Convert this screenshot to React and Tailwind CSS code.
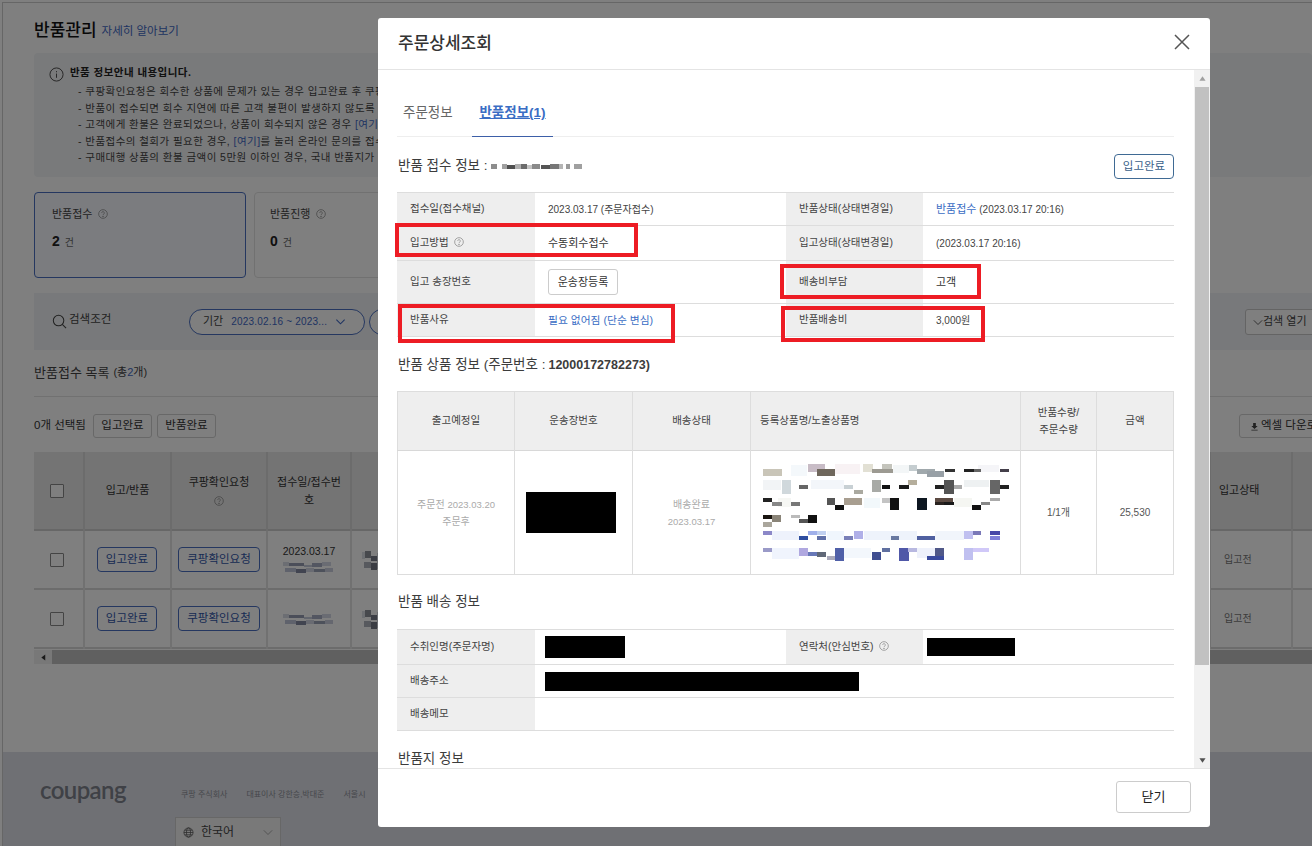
const PIX = [
[980,345,40,34,'#f4f8fb'],[1090,342,60,30,'#f8f2f4'],[1230,345,40,26,'#f3f6f7'],[1440,345,50,22,'#f5f5f8'],[912,392,44,30,'#f2f4f6'],[1030,392,80,26,'#f3f6fa'],[1405,392,60,20,'#eef1f2'],[950,445,30,26,'#f6f7f4'],[1160,445,40,30,'#f2f8fb'],[1380,445,44,26,'#f5f6f2'],[934,543,66,28,'#eef2fc'],[1068,543,44,28,'#f0f6fd'],[1160,543,130,28,'#eef3fb'],[1335,543,70,28,'#f1f5fb'],[934,595,66,34,'#f0f4fd'],[1112,595,66,30,'#f3f7fc'],[1290,595,44,30,'#eef1fb'],
[912,358,46,20,'#c9c5b8'],[1022,342,42,24,'#c8bcc6'],[1045,358,45,22,'#6f675c'],[1157,342,24,26,'#e2e0d4'],[1180,358,50,12,'#9c9a92'],[1205,342,24,16,'#c4c4bc'],[1270,345,20,20,'#c5cdd0'],[1290,358,45,14,'#a0a8ac'],[1315,365,40,16,'#98a0a6'],[1358,358,24,10,'#333333'],[1405,358,24,10,'#222222'],[1430,358,16,10,'#666666'],[1492,358,22,10,'#443f4a'],
[958,392,22,40,'#d0d8dc'],[1000,405,22,14,'#666666'],[1112,405,22,14,'#c8d0d4'],[1135,420,22,12,'#aaa9a0'],[1180,392,22,36,'#a8aaa6'],[1203,405,20,14,'#111111'],[1245,405,24,14,'#1a1a1a'],[1268,392,22,14,'#b5ae9c'],[1335,405,24,14,'#222222'],[1357,392,24,40,'#555555'],[1380,405,20,14,'#aaaaaa'],[1468,392,24,40,'#666666'],[1492,405,22,14,'#222222'],
[912,445,22,12,'#222222'],[934,458,24,10,'#888888'],[980,458,22,10,'#777777'],[1068,445,22,22,'#555555'],[1090,467,22,14,'#111111'],[1112,445,44,22,'#a89e90'],[1203,445,20,14,'#c4c4c4'],[1223,445,22,36,'#111111'],[1290,445,24,36,'#0d1620'],[1335,445,44,12,'#5b4a42'],[1335,457,22,10,'#2a2320'],[1357,457,24,10,'#1a1a1a'],[1425,467,22,14,'#111111'],[1447,457,22,10,'#888888'],[1468,445,24,10,'#aaaaaa'],
[912,495,24,14,'#1a1510'],[934,495,22,22,'#8a8478'],[912,517,22,14,'#aaa69c'],[980,495,22,10,'#bbbbbb'],[1000,507,24,12,'#555555'],[1023,495,22,24,'#111111'],
[912,543,22,14,'#8c88c8'],[1000,558,22,12,'#2e4ea0'],[1023,543,22,12,'#a0b0ea'],[1045,558,22,12,'#6070a8'],[1045,543,22,12,'#c0d0f0'],[1112,558,22,12,'#7a80b8'],[1135,543,22,24,'#b0b0e8'],[1225,558,20,12,'#6878a0'],[1290,558,44,12,'#5060a0'],[1405,543,22,24,'#c0c0f0'],[1427,543,20,14,'#7a78b8'],[1468,543,24,14,'#4848a8'],[1468,558,24,12,'#8080d8'],
[912,595,22,12,'#9a9ac8'],[1000,595,22,24,'#b0a8e0'],[1023,607,22,12,'#6878b8'],[1045,607,22,14,'#606878'],[1090,595,22,38,'#5060a8'],[1068,620,22,12,'#aaaabb'],[1180,607,22,24,'#404e90'],[1203,595,20,12,'#6070a0'],[1245,595,24,38,'#5058a8'],[1268,595,22,12,'#b8b8e0'],[1335,595,22,24,'#505888'],[1315,620,42,12,'#3a4a9e'],[1405,595,22,36,'#c0c0f0'],[1427,595,40,12,'#d0c8f8'],
];

function Help({ className = '' }) {
  return (
    <svg viewBox="0 0 12 12" className={`inline-block w-[10px] h-[10px] ${className}`} fill="none" stroke="#8a8a8a" strokeWidth="0.9">
      <circle cx="6" cy="6" r="5.2" />
      <path d="M4.4 4.8a1.6 1.6 0 1 1 2.4 1.4c-.5.3-.8.6-.8 1.2" />
      <circle cx="6" cy="9" r="0.4" fill="#8a8a8a" />
    </svg>
  );
}

function Blur({ cells, w, h, vx = 0, vy = 0, vw, vh, className = 'block' }) {
  return (
    <svg width={w} height={h} viewBox={`${vx} ${vy} ${vw} ${vh}`} preserveAspectRatio="none" shapeRendering="crispEdges" className={className}>
      {cells.map((c, i) => <rect key={i} x={c[0]} y={c[1]} width={c[2]} height={c[3]} fill={c[4]} />)}
    </svg>
  );
}

const BLUR_B = [[2,1,6,3,'#c8cede'],[8,2,14,2,'#6b7492'],[22,3,8,2,'#adb5cd'],[30,2,10,3,'#838ba9'],[40,1,8,3,'#c3c9dc'],[4,6,10,3,'#a5adc8'],[14,7,10,3,'#4f5878'],[24,6,8,3,'#bfc5d9'],[32,7,10,2,'#727b9a'],[42,6,8,3,'#b5bcd2']];
const BLUR_C = [[0,2,3,6,'#cfd3dc'],[3,1,5,6,'#5f6470'],[8,5,5,5,'#41475a'],[2,11,6,5,'#8d92a0'],[8,12,5,6,'#3d4354'],[13,3,3,14,'#c9ced8']];
const BLUR_ID = [[0,1,6,5,'#8d8d8d'],[11,1,5,5,'#a0a0a0'],[16,2,8,4,'#4f4f4f'],[24,1,6,5,'#b0b0b0'],[30,1,6,5,'#6c6c6c'],[36,2,5,4,'#c4c4c4'],[41,1,8,5,'#8a8a8a'],[50,2,9,4,'#555555'],[59,1,9,5,'#777777'],[68,1,4,5,'#b5b5b5'],[75,1,4,5,'#9a9a9a'],[83,1,8,5,'#a0a0a0']];

function OutlineBtn({ children, className = '' }) {
  return <span className={`flex items-center justify-center border text-[11.5px] bg-white rounded-[4px] h-[25px] ${className}`}>{children}</span>;
}

const pageBtn = 'border-[#4a6fc0] text-[#2f55a8]';

function Row({ check, state }) {
  return (
    <tr className="h-[59px] border-b-2 border-[#d8d8d8]">
      <td className="border-r-2 border-[#e2e2e2] text-center pr-[4px]"><span className="inline-block align-middle w-[14px] h-[14px] border border-[#888] bg-white rounded-[1px]" /></td>
      <td className="border-r-2 border-[#e2e2e2]"><OutlineBtn className={`${pageBtn} w-[60px] ml-[12px]`}>입고완료</OutlineBtn></td>
      <td className="border-r-2 border-[#e2e2e2]"><OutlineBtn className={`${pageBtn} w-[82px] mx-auto`}>쿠팡확인요청</OutlineBtn></td>
      <td className="border-r-2 border-[#e2e2e2] text-center text-[10.5px] text-[#333]">
        {check && <div className="leading-[14px] mb-[3px] -mt-[3px]">{check}</div>}
        <div className="flex justify-center"><Blur cells={BLUR_B} w={56} h={12} vw={54} vh={10} className="block opacity-70" /></div>
      </td>
      <td className="border-r-2 border-[#e2e2e2] pl-[10px]"><Blur cells={BLUR_C} w={18} h={20} vw={16} vh={18} className="block opacity-70" /></td>
      <td className="border-r-2 border-[#e2e2e2] text-[10px] text-[#777] pl-[13px]">{state}</td>
      <td />
    </tr>
  );
}

function Background() {
  return (
    <div className="ml-[2px] mt-[2px] h-[844px] border-l border-t border-[#cccccc] flex flex-col overflow-hidden">
      <div className="pl-[31px] flex-1 min-h-0">
        <div className="mt-[17px] h-[22px] flex items-center whitespace-nowrap">
          <span className="text-[17px] font-medium text-[#111]">반품관리</span>
          <span className="ml-[5px] text-[11.5px] text-[#3f68c4] mt-[2px]">자세히 알아보기</span>
        </div>
        <div className="mt-[11px] h-[124px] bg-[#f3f4f6] rounded-[4px] pl-[15px] pt-[12px] whitespace-nowrap flex">
          <svg viewBox="0 0 16 16" className="w-[15px] h-[15px] mt-[2px] shrink-0" fill="none" stroke="#444" strokeWidth="1">
            <circle cx="8" cy="8" r="7" />
            <path d="M8 7v4.5M8 4.4v1.2" />
          </svg>
          <div className="ml-[6px]">
            <div className="text-[10.5px] font-bold text-[#222] leading-[14px] tracking-[0.45px]">반품 정보안내 내용입니다.</div>
            <div className="pl-[8px] mt-[4px] text-[10.5px] text-[#444] leading-[16.5px] tracking-[0.45px]">
              <div>- 쿠팡확인요청은 회수한 상품에 문제가 있는 경우 입고완료 후 쿠팡에 확인을 요청하는 기능입니다.</div>
              <div>- 반품이 접수되면 회수 지연에 따른 고객 불편이 발생하지 않도록 처리해 주세요.</div>
              <div>- 고객에게 환불은 완료되었으나, 상품이 회수되지 않은 경우 <span className="text-[#3f68c4]">[여기]</span>를 눌러 문의해 주세요.</div>
              <div>- 반품접수의 철회가 필요한 경우, <span className="text-[#3f68c4]">[여기]</span>를 눌러 온라인 문의를 접수해 주세요.</div>
              <div>- 구매대행 상품의 환불 금액이 5만원 이하인 경우, 국내 반품지가 없어도 됩니다.</div>
            </div>
          </div>
        </div>
        <div className="mt-[15px] flex gap-[8px]">
          <div className="w-[212px] h-[86px] border border-[#4a6fc0] rounded-[4px] bg-[#f6f9ff] pl-[17px] pt-[13px]">
            <div className="text-[11px] text-[#444] flex items-center gap-[6px] h-[16px]">반품접수 <Help /></div>
            <div className="mt-[9px] flex items-baseline gap-[5px] text-[#222]"><b className="text-[14px]">2</b><span className="text-[10px] text-[#666]">건</span></div>
          </div>
          <div className="w-[212px] h-[86px] border border-[#e3e3e3] rounded-[4px] bg-white pl-[15px] pt-[13px]">
            <div className="text-[11px] text-[#444] flex items-center gap-[6px] h-[16px]">반품진행 <Help /></div>
            <div className="mt-[9px] flex items-baseline gap-[5px] text-[#222]"><b className="text-[14px]">0</b><span className="text-[10px] text-[#666]">건</span></div>
          </div>
        </div>
        <div className="mt-[15px] h-[57px] bg-[#f1f3f6] flex items-center whitespace-nowrap overflow-hidden relative">
          <svg viewBox="0 0 16 16" className="ml-[18px] w-[15px] h-[15px] shrink-0" fill="none" stroke="#444" strokeWidth="1.1">
            <circle cx="7" cy="7" r="5.6" />
            <path d="M11 11l4 4" />
          </svg>
          <span className="ml-[2px] w-[44px] shrink-0 text-[11.5px] text-[#444] -mt-[3px]">검색조건</span>
          <div className="ml-[76px] w-[176px] h-[26px] border border-[#4a6fc0] rounded-full bg-white flex items-center pl-[13px] text-[10px] gap-[8px] shrink-0">
            <span className="text-[#444] text-[11px]">기간</span>
            <span className="text-[#3f68c4] tracking-[0.2px]">2023.02.16 ~ 2023...</span>
            <svg viewBox="0 0 12 12" className="w-[11px] h-[11px]" fill="none" stroke="#3f68c4" strokeWidth="1.2"><path d="M1.500 4l4.500 4.500L10.500 4" /></svg>
          </div>
          <div className="ml-[4px] w-[60px] h-[26px] border border-[#4a6fc0] rounded-full bg-white shrink-0" />
          <div className="ml-auto w-[72px] -mr-[5px] h-[26px] border border-[#c8c8c8] rounded-[3px] bg-white flex items-center pl-[7px] text-[11px] text-[#444] shrink-0">
            <svg viewBox="0 0 12 12" className="w-[10px] h-[10px] shrink-0" fill="none" stroke="#444" strokeWidth="1"><path d="M1 4l5 5 5-5" /></svg>
            <span>검색 열기</span>
          </div>
        </div>
        <div className="mt-[12px] h-[21px] flex items-center text-[13px] text-[#444] whitespace-nowrap">
          반품접수 목록 <span className="ml-[4px] text-[11px]">(총<span className="text-[#3f68c4]">2</span>개)</span>
        </div>
        <div className="mt-[13px] border-t border-[#e3e3e3]" />
        <div className="mt-[17px] h-[24px] flex items-center text-[11.5px] text-[#333] whitespace-nowrap gap-[5px]">
          <span className="w-[54px] shrink-0">0개 선택됨</span>
          <span className="h-[24px] w-[59px] flex items-center justify-center border border-[#d0d0d0] rounded-[3px] shrink-0">입고완료</span>
          <span className="h-[24px] w-[59px] flex items-center justify-center border border-[#d0d0d0] rounded-[3px] shrink-0">반품완료</span>
          <span className="ml-auto -mr-[5px] w-[78px] h-[24px] flex items-center pl-[10px] border border-[#d0d0d0] rounded-[3px] gap-[2px] bg-white shrink-0 overflow-hidden">
            <svg viewBox="0 0 10 10" className="w-[9px] h-[9px] shrink-0" fill="#444"><path d="M3.500 1h3v3.500H8.500L5 7.800 1.500 4.500h2zM1.500 8.500h7v1h-7z" /></svg>
            엑셀 다운로드
          </span>
        </div>
        <div className="mt-[14px] w-[1306px]">
          <table className="w-[1306px] table-fixed">
            <colgroup><col className="w-[50px]" /><col className="w-[87px]" /><col className="w-[96px]" /><col className="w-[84px]" /><col className="w-[859px]" /><col className="w-[82px]" /><col className="w-[48px]" /></colgroup>
            <thead>
              <tr className="h-[78px] bg-[#e8e8e8] border-b-2 border-[#cfcfcf] text-[11px] text-[#333] font-normal">
                <th className="border-r-2 border-[#d8d8d8] font-normal text-center pr-[4px]"><span className="inline-block align-middle w-[14px] h-[14px] border border-[#888] bg-white rounded-[1px]" /></th>
                <th className="border-r-2 border-[#d8d8d8] font-normal">입고/반품</th>
                <th className="border-r-2 border-[#d8d8d8] font-normal"><div>쿠팡확인요청</div><Help className="mt-[3px]" /></th>
                <th className="border-r-2 border-[#d8d8d8] font-normal leading-[18px] px-[6px]">접수일/접수번호</th>
                <th className="border-r-2 border-[#d8d8d8] font-normal" />
                <th className="border-r-2 border-[#d8d8d8] font-normal text-left pl-[8px]">입고상태</th>
                <th />
              </tr>
            </thead>
            <tbody>
              <Row check="2023.03.17" state="입고전" />
              <Row state="입고전" />
            </tbody>
          </table>
          <div className="mt-[1px] h-[14px] bg-[#f1f1f1] flex items-stretch">
            <span className="w-[18px] flex items-center justify-center">
              <svg viewBox="0 0 8 8" className="w-[7px] h-[7px]" fill="#333"><path d="M6 0.500v7L1.500 4z" /></svg>
            </span>
            <span className="flex-1 bg-[#c1c1c1]" />
          </div>
        </div>
      </div>
      <footer className="h-[94px] shrink-0 bg-[#dfe1e8] pl-[37px] relative whitespace-nowrap overflow-hidden">
        <div className="flex items-start h-[52px]">
          <span className="mt-[22px] w-[88px] shrink-0 text-[24px] leading-[32px] font-['Lato',sans-serif] font-semibold text-[#7e828d] tracking-[-0.6px]">coupang</span>
          <div className="ml-[53px] mt-[37px] flex gap-[19px] text-[8px] text-[#8c8f98]">
            <span>쿠팡 주식회사</span><span>대표이사 강한승,박대준</span><span>서울시</span>
          </div>
        </div>
        <div className="ml-[135px] mt-[13px] w-[106px] h-[30px] border border-[#cfcfcf] bg-[#f3f3f3] flex items-center pl-[7px] text-[12px] text-[#444]">
          <svg viewBox="0 0 12 12" className="w-[11px] h-[11px]" fill="none" stroke="#555" strokeWidth="0.8"><circle cx="6" cy="6" r="5" /><ellipse cx="6" cy="6" rx="2.200" ry="5" /><path d="M1 6h10M1.800 3.500h8.400M1.800 8.500h8.400" /></svg>
          <span className="ml-[7px]">한국어</span>
          <svg viewBox="0 0 12 12" className="ml-auto mr-[7px] w-[10px] h-[10px]" fill="none" stroke="#999" strokeWidth="1"><path d="M1 4l5 5 5-5" /></svg>
        </div>
      </footer>
    </div>
  );
}

const labelCls = 'bg-[#eeeeee] pl-[13px] text-[10.5px] text-[#444] font-normal text-left';
const valueCls = 'pl-[13px] text-[10px] text-[#444]';
const valueLgCls = 'pl-[13px] text-[11px] text-[#333]';
const trCls = 'border-b border-[#dddddd]';
const headCls = 'h-[20px] flex items-center pl-[1px] text-[13.5px] text-[#3c3c3c]';

function Col4() {
  return <colgroup><col className="w-[138px]" /><col className="w-[251px]" /><col className="w-[137px]" /><col className="w-[251px]" /></colgroup>;
}

function Modal() {
  return (
    <div className="absolute left-[378px] top-[18px] w-[832px] h-[809px] bg-white rounded-[3px] flex flex-col overflow-hidden">
      <div className="h-[52px] shrink-0 border-b border-[#e4e4e4] flex items-center justify-between pl-[20px] pr-[20px]">
        <span className="text-[17px] text-[#333] font-medium">주문상세조회</span>
        <svg viewBox="0 0 16 16" className="w-[16px] h-[16px] mb-[4px]" fill="none" stroke="#555" strokeWidth="1.5"><path d="M1 1l14 14M15 1L1 15" /></svg>
      </div>
      <div className="flex-1 min-h-0 flex">
        <div className="w-[816px] pl-[19px] pr-[20px] overflow-hidden">
          <div className="h-[67px] border-b border-[#eeeeee] flex items-end">
            <span className="ml-[6px] mb-[14px] w-[69px] text-[13.5px] leading-[18px] text-[#666]">주문정보</span>
            <span className="w-[81px] h-[67px] -mb-[1px] border-b border-[#3d5fa8] flex items-end justify-center pb-[14px] text-[13.5px] leading-[18px] font-bold text-[#3a6dc4] underline">반품정보(1)</span>
          </div>
          <div className="mt-[17px] h-[25px] flex items-center">
            <span className="text-[13.5px] pl-[1px] text-[#3c3c3c]">반품 접수 정보 :</span>
            <span className="ml-[3px]"><Blur cells={BLUR_ID} w={94} h={7} vw={94} vh={7} /></span>
            <OutlineBtn className="ml-auto w-[60px] border-[#3f6a94] text-[#3a5f8a]">입고완료</OutlineBtn>
          </div>
          <table className="mt-[13px] w-[777px] table-fixed border-t border-[#dddddd]">
            <Col4 />
            <tbody>
              <tr className={`${trCls} h-[33px]`}>
                <th className={labelCls}>접수일(접수채널)</th>
                <td className={valueCls}>2023.03.17 (주문자접수)</td>
                <th className={labelCls}>반품상태(상태변경일)</th>
                <td className={valueCls}><span className="text-[#3a6dc4] text-[11px]">반품접수</span> (2023.03.17 20:16)</td>
              </tr>
              <tr className={`${trCls} h-[35px]`}>
                <th className={labelCls}>입고방법 <Help className="ml-[2px] align-[-1px]" /></th>
                <td className={valueLgCls}>수동회수접수</td>
                <th className={labelCls}>입고상태(상태변경일)</th>
                <td className={valueCls}>(2023.03.17 20:16)</td>
              </tr>
              <tr className={`${trCls} h-[43px]`}>
                <th className={labelCls}>입고 송장번호</th>
                <td className="pl-[13px]"><span className="inline-flex items-center justify-center w-[70px] h-[26px] border border-[#cccccc] rounded-[3px] text-[11px] text-[#333]">운송장등록</span></td>
                <th className={labelCls}>배송비부담</th>
                <td className={valueLgCls}>고객</td>
              </tr>
              <tr className={`${trCls} h-[33px]`}>
                <th className={labelCls}>반품사유</th>
                <td className="pl-[13px] text-[10.75px] text-[#3a6dc4]">필요 없어짐 (단순 변심)</td>
                <th className={labelCls}>반품배송비</th>
                <td className={valueCls}>3,000원</td>
              </tr>
            </tbody>
          </table>
          <div className={`mt-[18px] ${headCls}`}>반품 상품 정보 (주문번호 : <span className="ml-[3px] font-bold text-[12.5px]">12000172782273)</span></div>
          <table className="mt-[16px] w-[776px] table-fixed border border-[#dddddd] text-center">
            <colgroup><col className="w-[117px]" /><col className="w-[118px]" /><col className="w-[118px]" /><col className="w-[270px]" /><col className="w-[76px]" /><col className="w-[77px]" /></colgroup>
            <thead>
              <tr className="h-[59px] bg-[#eeeeee] border-b border-[#d8d8d8] text-[10.5px] text-[#444]">
                <th className="font-normal border-r border-[#dddddd]">출고예정일</th>
                <th className="font-normal border-r border-[#dddddd]">운송장번호</th>
                <th className="font-normal border-r border-[#dddddd]">배송상태</th>
                <th className="font-normal border-r border-[#dddddd] text-left pl-[9px]">등록상품명/노출상품명</th>
                <th className="font-normal border-r border-[#dddddd] leading-[17px]">반품수량/<br />주문수량</th>
                <th className="font-normal">금액</th>
              </tr>
            </thead>
            <tbody>
              <tr className="h-[124px] text-[10px]">
                <td className="border-r border-[#dddddd] text-[#aaaaaa] leading-[17px]">주문전 <span className="text-[9.5px]">2023.03.20</span><br />주문후</td>
                <td className="border-r border-[#dddddd]"><div className="w-[90px] h-[41px] bg-black ml-[11px]" /></td>
                <td className="border-r border-[#dddddd] text-[#aaaaaa] leading-[17px]">배송완료<br /><span className="text-[9.5px]">2023.03.17</span></td>
                <td className="border-r border-[#dddddd] pl-[9px]"><Blur cells={PIX} w={253} h={100} vx={905} vy={340} vw={620} vh={300} /></td>
                <td className="border-r border-[#dddddd] text-[#555]">1/1개</td>
                <td className="text-[#555]">25,530</td>
              </tr>
            </tbody>
          </table>
          <div className={`mt-[17px] ${headCls}`}>반품 배송 정보</div>
          <table className="mt-[17px] w-[777px] table-fixed border-t border-[#dddddd]">
            <Col4 />
            <tbody>
              <tr className={`${trCls} h-[35px]`}>
                <th className={labelCls}>수취인명(주문자명)</th>
                <td className="pl-[10px]"><div className="w-[80px] h-[22px] bg-black" /></td>
                <th className={labelCls}>연락처(안심번호) <Help className="ml-[2px] align-[-1px]" /></th>
                <td className="pl-[4px]"><div className="w-[88px] h-[18px] bg-black" /></td>
              </tr>
              <tr className={`${trCls} h-[33px]`}>
                <th className={labelCls}>배송주소</th>
                <td colSpan={3} className="pl-[10px]"><div className="w-[314px] h-[19px] bg-black" /></td>
              </tr>
              <tr className={`${trCls} h-[33px]`}>
                <th className={labelCls}>배송메모</th>
                <td colSpan={3} />
              </tr>
            </tbody>
          </table>
          <div className={`mt-[18px] ${headCls}`}>반품지 정보</div>
        </div>
        <div className="w-[16px] shrink-0 bg-[#f1f1f1] flex flex-col items-center">
          <svg viewBox="0 0 8 8" className="w-[7px] h-[7px] mt-[5px] mb-[5px]" fill="#a0a0a0"><path d="M4 1.500L7.500 6.500h-7z" /></svg>
          <div className="w-[14px] h-[578px] bg-[#c1c1c1]" />
          <svg viewBox="0 0 8 8" className="w-[7px] h-[7px] mt-auto mb-[4px]" fill="#505050"><path d="M4 6.500L.500 1.500h7z" /></svg>
        </div>
      </div>
      <div className="h-[59px] shrink-0 border-t border-[#e4e4e4] flex items-center justify-end pr-[19px]">
        <span className="w-[75px] h-[32px] -mt-[3px] border border-[#cccccc] rounded-[3px] flex items-center justify-center text-[13px] text-[#222]">닫기</span>
      </div>
    </div>
  );
}

const MARKS = [
  'left-[395px] top-[223px] w-[243px] h-[34px]',
  'left-[398px] top-[304px] w-[277px] h-[39px]',
  'left-[780px] top-[264px] w-[201px] h-[35px]',
  'left-[781px] top-[306px] w-[204px] h-[36px]',
];

export default function App() {
  return (
    <div className="relative w-[1312px] h-[846px] overflow-hidden bg-white font-['Liberation_Sans','Noto_Sans_CJK_KR',sans-serif]">
      <Background />
      <div className="absolute inset-0 bg-black/50" />
      <Modal />
      {MARKS.map((m) => <div key={m} className={`absolute border-[4px] border-[#ed1c24] ${m}`} />)}
    </div>
  );
}
